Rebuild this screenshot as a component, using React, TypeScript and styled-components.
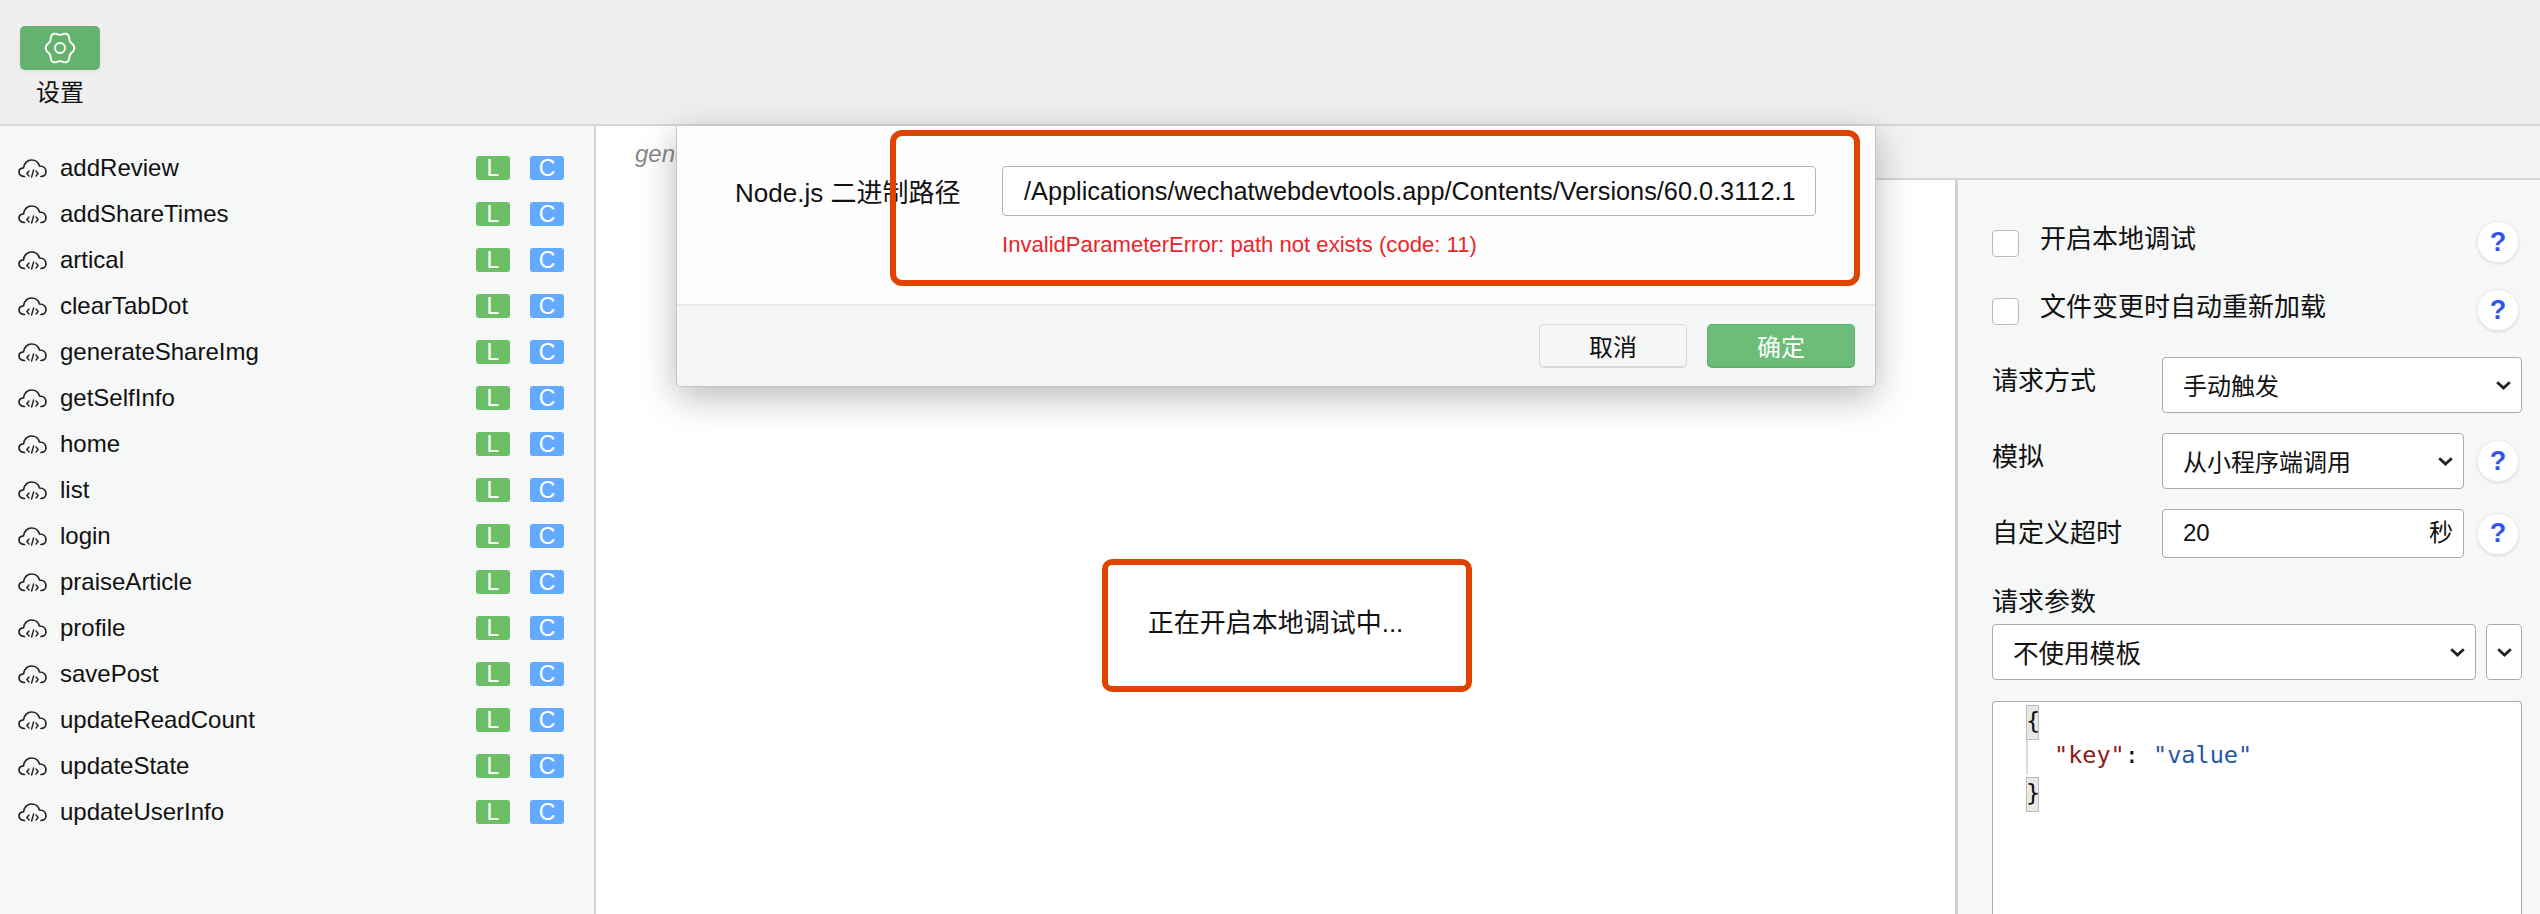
import React, { FC } from 'react';
import styled, { createGlobalStyle } from 'styled-components';

const SANS = `"Liberation Sans", "Noto Sans CJK SC", sans-serif`;

const GlobalStyle = createGlobalStyle`
  html, body {
    margin: 0;
    padding: 0;
    overflow: hidden;
    background: #fff;
  }
  * {
    box-sizing: border-box;
  }
`;

const Page = styled.div`
  display: flex;
  flex-direction: column;
  width: 2540px;
  height: 914px;
  overflow: hidden;
  font-family: ${SANS};
  font-size: 24px;
  color: #111;
`;

const TopBar = styled.header`
  flex: none;
  height: 126px;
  padding: 26px 0 0 20px;
  background: #efefef;
  border-bottom: 2px solid #d6d6d6;
`;

const ToolButton = styled.div`
  display: flex;
  flex-direction: column;
  align-items: center;
  width: 80px;
`;

const ToolIcon = styled.div`
  display: flex;
  align-items: center;
  justify-content: center;
  width: 80px;
  height: 44px;
  border-radius: 5px;
  background: #65b26f;
  box-shadow: 0 2px 5px rgba(0, 0, 0, 0.05);
`;

const ToolLabel = styled.span`
  margin-top: 9px;
  line-height: 28px;
`;

const Content = styled.div`
  flex: 1;
  display: flex;
  min-height: 0;
`;

const Sidebar = styled.aside`
  flex: none;
  width: 596px;
  padding-top: 19px;
  background: #f6f7f7;
  border-right: 2px solid #d2d2d2;
`;

const FunctionRow = styled.div`
  display: flex;
  align-items: center;
  height: 46px;
  padding-left: 18px;
`;

const FunctionName = styled.span`
  flex: 1;
  margin-left: 13px;
`;

const Badge = styled.span<{ $color: string }>`
  display: flex;
  align-items: center;
  justify-content: center;
  width: 34px;
  height: 24px;
  margin-right: 20px;
  border-radius: 3px;
  background: ${props => props.$color};
  color: #fff;
  font-size: 23px;
  & + & {
    margin-right: 30px;
  }
`;

const Workspace = styled.div`
  position: relative;
  flex: 1;
  display: flex;
  flex-direction: column;
  min-width: 0;
`;

const TabStrip = styled.div`
  flex: none;
  height: 54px;
  background: #f2f2f2;
  border-bottom: 2px solid #d6d6d6;
`;

const ActiveTab = styled.div`
  width: 400px;
  height: 54px;
  padding: 10px 0 0 39px;
  background: #fff;
  color: #888;
  font-style: italic;
  line-height: 36px;
`;

const Panels = styled.div`
  flex: 1;
  display: flex;
  min-height: 0;
`;

const MainPanel = styled.main`
  flex: 1;
  display: flex;
  justify-content: center;
  padding-top: 425px;
  background: #fff;
`;

const LoadingText = styled.div`
  position: relative;
  height: 36px;
  font-size: 26px;
  line-height: 36px;
`;

const LoadingMark = styled.div`
  position: absolute;
  top: -46px;
  right: -69px;
  bottom: -51px;
  left: -46px;
  border: 6px solid #e04300;
  border-radius: 10px;
`;

const Settings = styled.section`
  flex: none;
  display: flex;
  flex-direction: column;
  width: 585px;
  padding: 41px 18px 0 34px;
  background: #f6f7f7;
  border-left: 3px solid #d2d2d2;
`;

const CheckRow = styled.div`
  display: flex;
  align-items: center;
  height: 42px;
  margin-bottom: 26px;
  padding-right: 3px;
  font-size: 26px;
`;

const CheckBox = styled.span`
  flex: none;
  width: 27px;
  height: 27px;
  margin: 3px 21px 0 0;
  background: #fff;
  border: 1px solid #bbb;
  border-radius: 4px;
`;

const CheckLabel = styled.span`
  flex: 1;
  margin-top: -12px;
`;

const Help = styled.span`
  flex: none;
  display: flex;
  align-items: center;
  justify-content: center;
  width: 42px;
  height: 42px;
  background: #fff;
  border: 1px solid #eee;
  border-radius: 50%;
  box-shadow: 0 1px 3px rgba(0, 0, 0, 0.12);
  color: #2f55ee;
  font-size: 27px;
  font-weight: 700;
`;

const FieldRow = styled.div<{ $gap?: number }>`
  display: flex;
  align-items: center;
  margin-bottom: 20px;
  gap: 13px;
  padding-right: ${props => props.$gap ?? 0}px;
`;

const FieldLabel = styled.span<{ $raised?: boolean }>`
  flex: none;
  width: 157px;
  padding-bottom: ${props => (props.$raised ? 14 : 6)}px;
  font-size: 26px;
`;

const Control = styled.div<{ $height?: number; $size?: number }>`
  flex: 1;
  display: flex;
  align-items: center;
  justify-content: space-between;
  height: ${props => props.$height ?? 56}px;
  min-width: 0;
  padding: 0 10px 2px 20px;
  background: #fff;
  border: 1px solid #aaa;
  border-radius: 4px;
  font-size: ${props => props.$size ?? 24}px;
`;

const Unit = styled.span`
  padding-bottom: 4px;
`;

const SmallSelect = styled(Control)`
  flex: none;
  width: 36px;
  padding: 0 9px 2px 9px;
  justify-content: center;
`;

const SectionLabel = styled.div`
  height: 34px;
  line-height: 34px;
  margin: 7px 0 5px;
  font-size: 26px;
`;

const TemplateRow = styled.div`
  display: flex;
  gap: 10px;
  margin-bottom: 21px;
`;

const Editor = styled.div`
  flex: 1;
  padding: 1px 0 0 33px;
  background: #fff;
  border: 1px solid #aaa;
  border-bottom: none;
  border-radius: 4px 4px 0 0;
  font-family: "DejaVu Sans Mono", monospace;
  font-size: 23.5px;
`;

const CodeLine = styled.div`
  height: 36px;
  line-height: 36px;
  white-space: pre;
`;

const GuideLine = styled(CodeLine)`
  padding-left: 26px;
  border-left: 2px solid #ddd;
  line-height: 33px;
`;

const Brace = styled.span`
  display: inline-block;
  width: 13px;
  height: 35px;
  background: #e8e8e4;
  border: 1px solid #bbb;
  line-height: 31px;
  text-indent: -1px;
`;

const KeyToken = styled.span`
  color: #8b1a1a;
`;

const ValueToken = styled.span`
  color: #2a56a6;
`;

const Dialog = styled.div`
  position: absolute;
  top: 0;
  left: 80px;
  display: flex;
  flex-direction: column;
  width: 1200px;
  height: 261px;
  background: #f6f6f6;
  border: 1px solid #c4c4c4;
  border-top: none;
  border-radius: 0 0 5px 5px;
  box-shadow: 0 10px 36px rgba(0, 0, 0, 0.28);
`;

const DialogBody = styled.div`
  position: relative;
  flex: none;
  height: 180px;
  padding: 40px 0 0 58px;
  background: #fdfdfd;
  border-bottom: 2px solid #e8e8e8;
`;

const PathRow = styled.div`
  display: flex;
  align-items: center;
`;

const PathLabel = styled.label`
  flex: none;
  width: 267px;
  padding-bottom: 2px;
  font-size: 26px;
  white-space: nowrap;
`;

const PathInput = styled.div`
  width: 814px;
  height: 50px;
  padding: 0 19px 0 21px;
  overflow: hidden;
  background: #fff;
  border: 1px solid #b4b4b4;
  border-radius: 4px;
  font-size: 25.3px;
  line-height: 48px;
  white-space: nowrap;
`;

const PathError = styled.div`
  margin: 16px 0 0 267px;
  color: #e8262a;
  font-size: 22.1px;
  line-height: 26px;
`;

const DialogMark = styled.div`
  position: absolute;
  top: 4px;
  left: 213px;
  width: 970px;
  height: 156px;
  border: 6px solid #e04300;
  border-radius: 12px;
`;

const DialogFooter = styled.div`
  flex: 1;
  display: flex;
  justify-content: flex-end;
  gap: 20px;
  padding: 18px 20px 0 0;
`;

const DialogButton = styled.button<{ $primary?: boolean }>`
  width: 148px;
  height: 44px;
  padding: 0;
  background: ${props => (props.$primary ? '#6bbd78' : '#f6f6f6')};
  border: 1px solid ${props => (props.$primary ? '#5fae6c' : '#d8d8d8')};
  border-bottom-width: 2px;
  border-radius: 5px;
  color: ${props => (props.$primary ? '#fff' : '#111')};
  font-family: ${SANS};
  font-size: 24px;
`;

const ChevronMark = styled.svg`
  flex: none;
  margin-top: 2px;
`;

const gearPath = (() => {
  const points: string[] = [];
  for (let i = 0; i < 180; i++) {
    const angle = (i / 180) * Math.PI * 2;
    const radius = 13 + 1.3 * Math.cos(angle * 6);
    const x = 16 + radius * Math.cos(angle);
    const y = 16 + radius * 1.12 * Math.sin(angle);
    points.push(`${x.toFixed(2)} ${y.toFixed(2)}`);
  }
  return `M${points.join('L')}Z`;
})();

const GearIcon: FC = () => (
  <svg width="32" height="32" viewBox="0 0 32 32" fill="none" stroke="#fff" strokeWidth="1.9" aria-hidden="true">
    <path d={gearPath} />
    <circle cx="16" cy="16" r="5" />
  </svg>
);

const CloudIcon: FC = () => (
  <svg width="29" height="19" viewBox="0 0 29 19" fill="none" stroke="#222" strokeWidth="1.7" strokeLinecap="round" strokeLinejoin="round" aria-hidden="true">
    <path d="M6.5 17.5C3 17.5 1 15.5 1 13C1 10.5 3 9 5.5 8.8C6 4 9.5 1 13.5 1C17.5 1 20.5 3.5 21.5 7C25.5 7 28 9.5 28 12.8C28 15.5 26 17.5 23 17.5" />
    <path d="M11 12L8.8 14.5L11 17M15.6 11L13.6 18M18 12L20.2 14.5L18 17" strokeWidth="1.4" />
  </svg>
);

const Chevron: FC = () => (
  <ChevronMark width="15" height="9" viewBox="0 0 15 9" fill="none" stroke="#222" strokeWidth="2.8" aria-hidden="true">
    <path d="M1.2 1.2L7.5 7L13.8 1.2" />
  </ChevronMark>
);

const FUNCTIONS = [
  'addReview',
  'addShareTimes',
  'artical',
  'clearTabDot',
  'generateShareImg',
  'getSelfInfo',
  'home',
  'list',
  'login',
  'praiseArticle',
  'profile',
  'savePost',
  'updateReadCount',
  'updateState',
  'updateUserInfo',
];

const App: FC = () => (
  <Page>
    <GlobalStyle />
    <TopBar>
      <ToolButton>
        <ToolIcon>
          <GearIcon />
        </ToolIcon>
        <ToolLabel>设置</ToolLabel>
      </ToolButton>
    </TopBar>
    <Content>
      <Sidebar>
        {FUNCTIONS.map(name => (
          <FunctionRow key={name}>
            <CloudIcon />
            <FunctionName>{name}</FunctionName>
            <Badge $color="#6cbf67">L</Badge>
            <Badge $color="#63a9ff">C</Badge>
          </FunctionRow>
        ))}
      </Sidebar>
      <Workspace>
        <TabStrip>
          <ActiveTab>generateShareImg</ActiveTab>
        </TabStrip>
        <Panels>
          <MainPanel>
            <LoadingText>
              正在开启本地调试中...
              <LoadingMark />
            </LoadingText>
          </MainPanel>
          <Settings>
            <CheckRow>
              <CheckBox />
              <CheckLabel>开启本地调试</CheckLabel>
              <Help>?</Help>
            </CheckRow>
            <CheckRow>
              <CheckBox />
              <CheckLabel>文件变更时自动重新加载</CheckLabel>
              <Help>?</Help>
            </CheckRow>
            <FieldRow>
              <FieldLabel $raised>请求方式</FieldLabel>
              <Control>
                手动触发
                <Chevron />
              </Control>
            </FieldRow>
            <FieldRow $gap={3}>
              <FieldLabel $raised>模拟</FieldLabel>
              <Control>
                从小程序端调用
                <Chevron />
              </Control>
              <Help>?</Help>
            </FieldRow>
            <FieldRow $gap={3}>
              <FieldLabel>自定义超时</FieldLabel>
              <Control $height={49}>
                20
                <Unit>秒</Unit>
              </Control>
              <Help>?</Help>
            </FieldRow>
            <SectionLabel>请求参数</SectionLabel>
            <TemplateRow>
              <Control $size={25.6}>
                不使用模板
                <Chevron />
              </Control>
              <SmallSelect>
                <Chevron />
              </SmallSelect>
            </TemplateRow>
            <Editor>
              <CodeLine>
                <Brace>{'{'}</Brace>
              </CodeLine>
              <GuideLine>
                <KeyToken>"key"</KeyToken>: <ValueToken>"value"</ValueToken>
              </GuideLine>
              <CodeLine>
                <Brace>{'}'}</Brace>
              </CodeLine>
            </Editor>
          </Settings>
        </Panels>
        <Dialog>
          <DialogBody>
            <PathRow>
              <PathLabel>Node.js 二进制路径</PathLabel>
              <PathInput>/Applications/wechatwebdevtools.app/Contents/Versions/60.0.3112.1</PathInput>
            </PathRow>
            <PathError>InvalidParameterError: path not exists (code: 11)</PathError>
            <DialogMark />
          </DialogBody>
          <DialogFooter>
            <DialogButton>取消</DialogButton>
            <DialogButton $primary>确定</DialogButton>
          </DialogFooter>
        </Dialog>
      </Workspace>
    </Content>
  </Page>
);

export default App;
